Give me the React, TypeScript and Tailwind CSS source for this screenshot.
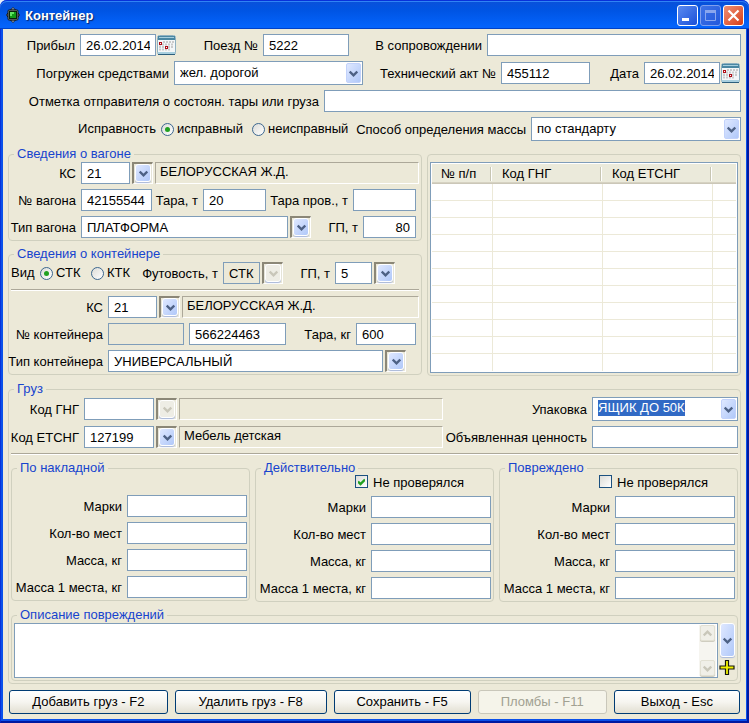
import { useEffect, useRef, type ReactNode } from "react";

function Lbl({ htmlFor, className = "", children }: { htmlFor?: string; className?: string; children: ReactNode }) {
  return (
    <label htmlFor={htmlFor} className={`flex shrink-0 items-center justify-end whitespace-nowrap pt-[2px] pr-[5px] ${className}`}>
      {children}
    </label>
  );
}

function Txt({ id, value = "", className = "", disabled = false, label }: { id?: string; value?: string; className?: string; disabled?: boolean; label?: string }) {
  return (
    <input
      id={id}
      type="text"
      aria-label={label}
      defaultValue={value}
      disabled={disabled}
      className={`h-[22px] min-w-0 border border-[#7f9db9] px-[5px] leading-4 outline-none ${disabled ? "bg-[#ece9d8]" : "bg-white"} ${className}`}
    />
  );
}

function Chevron({ up = false, color = "#4d6185" }: { up?: boolean; color?: string }) {
  return (
    <svg width="9" height="7" viewBox="0 0 9 7" fill="none" aria-hidden="true">
      <path d={up ? "M.7 5.5 4.5 1.700 8.300 5.500" : "M.7 1.500 4.500 5.300 8.300 1.500"} stroke={color} strokeWidth="2.4" />
    </svg>
  );
}

const blueFace = "bg-linear-to-br from-[#dfe8ff] to-[#b0c8f9]";

function DropButton({ label, disabled = false }: { label: string; disabled?: boolean }) {
  return (
    <button
      type="button"
      aria-label={label}
      disabled={disabled}
      className="mx-[2px] flex h-[22px] w-[21px] shrink-0 border-t-2 border-l-2 border-r border-b border-t-[#8b8777] border-l-[#8b8777] border-r-white border-b-white pl-px"
    >
      <span
        className={`flex h-[18px] w-4 items-center justify-center rounded-[3px] border border-white shadow-[0_1px_1px_#a9b8dc] ${
          disabled ? "bg-[#eeede5]" : blueFace
        }`}
      >
        <Chevron color={disabled ? "#c9c7ba" : undefined} />
      </span>
    </button>
  );
}

function ComboArrow({ className }: { className: string }) {
  return (
    <span className={`pointer-events-none absolute flex w-[15px] items-center justify-center rounded-[2px] border border-[#c2d2fb] ${blueFace} ${className}`}>
      <Chevron />
    </span>
  );
}

function Select({ id, value, className = "" }: { id: string; value: string; className?: string }) {
  return (
    <span className={`relative flex h-6 min-w-0 ${className}`}>
      <select id={id} defaultValue={value} className="w-full appearance-none border border-[#7f9db9] bg-white pr-5 pl-[5px] leading-4 outline-none">
        <option>{value}</option>
      </select>
      <ComboArrow className="inset-y-[2px] right-[2px]" />
    </span>
  );
}

function EditableCombo({ id, value, className = "" }: { id: string; value: string; className?: string }) {
  const ref = useRef<HTMLInputElement>(null);
  useEffect(() => {
    ref.current?.focus();
    ref.current?.select();
  }, []);
  return (
    <span className={`relative flex h-6 items-start border border-[#7f9db9] bg-white pt-[2px] pr-5 pl-[5px] ${className}`}>
      <input
        ref={ref}
        id={id}
        role="combobox"
        aria-expanded="false"
        aria-controls={id}
        defaultValue={value}
        className="h-4 w-full min-w-0 leading-4 outline-none selection:bg-[#316ac5] selection:text-white"
      />
      <ComboArrow className="inset-y-px right-px" />
    </span>
  );
}

function Radio({ name, label, checked = false, className = "" }: { name: string; label: string; checked?: boolean; className?: string }) {
  return (
    <label className={`flex shrink-0 items-center gap-[3px] whitespace-nowrap ${className}`}>
      <span className="grid size-[13px] place-items-center">
        <input
          type="radio"
          name={name}
          defaultChecked={checked}
          className="peer size-[13px] appearance-none rounded-full border border-[#3c678f] bg-linear-to-br from-[#dcdcd7] to-white [grid-area:1/1]"
        />
        <span className="pointer-events-none hidden size-[5px] rounded-full bg-[#21a121] [grid-area:1/1] peer-checked:block" />
      </span>
      {label}
    </label>
  );
}

function Check({ label, checked = false }: { label: string; checked?: boolean }) {
  return (
    <label className="ml-[97px] flex h-4 items-start gap-[5px] whitespace-nowrap">
      <span className="grid size-[13px] place-items-center">
        <input
          type="checkbox"
          defaultChecked={checked}
          className="peer size-[13px] appearance-none border border-[#1c5180] bg-linear-to-br from-[#dcdcd7] to-white [grid-area:1/1]"
        />
        <svg width="7" height="8" viewBox="0 0 7 8" className="pointer-events-none hidden [grid-area:1/1] peer-checked:block" fill="none" aria-hidden="true">
          <path d="M0 3.5 2.5 6 7 1.5" stroke="#21a121" strokeWidth="2.4" />
        </svg>
      </span>
      {label}
    </label>
  );
}

function Group({ title, className = "", children }: { title: string; className?: string; children: ReactNode }) {
  return (
    <fieldset className={`min-w-0 rounded-[4px] border border-[#d0d0bf] px-[2px] pb-[2px] ${className}`}>
      <legend className="ml-[3px] px-[3px] leading-[14px] text-[#1744ce]">{title}</legend>
      {children}
    </fieldset>
  );
}

function Panel({ children }: { children?: ReactNode }) {
  return (
    <output className="block h-[22px] min-w-0 flex-1 truncate border border-t-[#aca899] border-r-white border-b-white border-l-[#aca899] px-1 leading-[17px]">
      {children}
    </output>
  );
}

function Divider() {
  return <hr className="h-[2px] border-t border-b border-t-[#aca899] border-b-white" />;
}

function CalendarButton({ label }: { label: string }) {
  return (
    <button type="button" aria-label={label} className="ml-px h-[22px] w-5 shrink-0">
      <svg width="20" height="22" viewBox="0 0 20 22" aria-hidden="true">
        <rect x="0.5" y="1.5" width="18" height="19" rx="2" fill="#f4f7f8" stroke="#8fb0c0" />
        <path d="M1 2h17v4H1z" fill="#4a87a2" />
        <path d="M2 3.500h15" stroke="#a6cede" />
        <path d="M1 18h17v2H1z" fill="#a8cfdf" />
        <path d="M1 20.5h17" stroke="#2c5f7d" />
        <path d="M6 8h11M2 10.500h15M2 13h15M2 15.500h12" stroke="#cbcbcb" strokeWidth="2" strokeDasharray="2 1" />
        <rect x="2.5" y="8.5" width="2" height="2" fill="#fff" stroke="#b00d16" />
        <rect x="8.5" y="12.5" width="2" height="2" fill="#fff" stroke="#b00d16" />
      </svg>
    </button>
  );
}

function CargoFields({ id, title, check, checked }: { id: string; title: string; check?: boolean; checked?: boolean }) {
  return (
    <Group title={title} className="flex-1">
      {check && <Check label="Не проверялся" checked={checked} />}
      <div className={`flex flex-col gap-[5px] ${check ? "pt-[5px]" : "pt-5"}`}>
        {["Марки", "Кол-во мест", "Масса, кг", "Масса 1 места, кг"].map((text, i) => (
          <div key={text} className="flex">
            <Lbl htmlFor={`${id}-${i}`} className="w-[113px]">{text}</Lbl>
            <Txt id={`${id}-${i}`} className="flex-1" />
          </div>
        ))}
      </div>
    </Group>
  );
}

function CommandButton({ className = "", disabled = false, children }: { className?: string; disabled?: boolean; children: ReactNode }) {
  return (
    <button
      type="button"
      disabled={disabled}
      className={`h-6 rounded-[3px] border whitespace-nowrap ${
        disabled
          ? "border-[#c9c7ba] bg-[#f5f4ea] text-[#a1a192]"
          : "border-[#003c74] bg-linear-to-b from-white via-[#f6f5f0] to-[#e2dfd2]"
      } ${className}`}
    >
      {children}
    </button>
  );
}

function TitleBar() {
  const box = "flex size-[21px] items-center justify-center rounded-[3px] border";
  return (
    <header className="flex h-[29px] items-center rounded-t-[7px] bg-linear-to-b from-[#0a50d8] from-0% via-[#0054e3] via-35% to-[#0463fb] to-90% pr-[5px] pl-[6px] shadow-[inset_0_1px_0_#0831d9,inset_0_2px_0_#2f83f5,inset_0_-1px_0_#0042c8]">
      <svg width="14" height="16" viewBox="0 0 14 16" aria-hidden="true">
        <path d="M7 .5 9.500 3h-5zM7 15.500 4.500 13h5zM.5 8 2 6v4zM13.500 8 12 6v4z" fill="#dfe6e6" stroke="#10161c" strokeWidth="1" />
        <rect x="2" y="3" width="10" height="10" rx="1" fill="#8f9c94" stroke="#10161c" />
        <rect x="3.5" y="4.500" width="7" height="7" fill="#129a16" stroke="#06230a" />
        <path d="M4 5h4v2H6v2H4z" fill="#5fe35f" />
      </svg>
      <h1 className="ml-[5px] flex-1 pt-[2px] text-[13px] font-bold text-white [text-shadow:1px_1px_1px_#0a246a]">Контейнер</h1>
      <div className="flex gap-[2px] pt-[2px]">
        <button type="button" aria-label="Свернуть" className={`${box} border-white bg-linear-to-br from-[#5b8af0] to-[#1c4fd8]`}>
          <svg width="13" height="13" viewBox="0 0 13 13" aria-hidden="true"><path d="M1 9h7v3H1z" fill="#fff" /></svg>
        </button>
        <button type="button" aria-label="Развернуть" disabled className={`${box} border-[#7f9fee] bg-linear-to-br from-[#3f72e6] to-[#2258dc]`}>
          <svg width="13" height="13" viewBox="0 0 13 13" fill="none" aria-hidden="true">
            <path d="M1.500 1.500h10v10h-10z" stroke="#8aa6ee" />
            <path d="M1 2.500h11" stroke="#8aa6ee" strokeWidth="3" />
          </svg>
        </button>
        <button type="button" aria-label="Закрыть" className={`${box} border-white bg-linear-to-br from-[#ee8e72] to-[#d63a0d]`}>
          <svg width="13" height="13" viewBox="0 0 13 13" aria-hidden="true"><path d="M1.500 1.500l10 10M11.500 1.500l-10 10" stroke="#fff" strokeWidth="2.200" /></svg>
        </button>
      </div>
    </header>
  );
}

function WagonGroup() {
  return (
    <Group title="Сведения о вагоне">
      <div className="flex flex-col gap-[5px] pt-px">
        <div className="flex">
          <Lbl htmlFor="w-ks" className="w-[70px]">КС</Lbl>
          <Txt id="w-ks" value="21" className="w-[49px]" />
          <DropButton label="Выбрать КС вагона" />
          <Panel>БЕЛОРУССКАЯ Ж.Д.</Panel>
        </div>
        <div className="flex pr-[3px]">
          <Lbl htmlFor="w-no" className="w-[70px]">№ вагона</Lbl>
          <Txt id="w-no" value="42155544" className="w-[71px]" />
          <Lbl htmlFor="w-tara" className="w-[51px]">Тара, т</Lbl>
          <Txt id="w-tara" value="20" className="w-[63px]" />
          <Lbl htmlFor="w-tara2" className="w-[87px]">Тара пров., т</Lbl>
          <Txt id="w-tara2" className="flex-1" />
        </div>
        <div className="flex pr-[3px]">
          <Lbl htmlFor="w-type" className="w-[70px]">Тип вагона</Lbl>
          <Txt id="w-type" value="ПЛАТФОРМА" className="flex-1" />
          <DropButton label="Выбрать тип вагона" />
          <Lbl htmlFor="w-gp" className="w-[50px]">ГП, т</Lbl>
          <Txt id="w-gp" value="80" className="w-[53px] text-right" />
        </div>
      </div>
    </Group>
  );
}

function ContainerGroup() {
  return (
    <Group title="Сведения о контейнере">
      <div className="flex flex-col gap-[5px] pt-px">
        <div className="flex">
          <span className="flex w-[29px] items-center">Вид</span>
          <Radio name="kind" label="СТК" checked className="w-[51px]" />
          <Radio name="kind" label="КТК" className="w-[46px]" />
          <Lbl htmlFor="c-foot" className="w-[86px]">Футовость, т</Lbl>
          <Txt id="c-foot" value="СТК" disabled className="w-[37px]" />
          <DropButton label="Выбрать футовость" disabled />
          <Lbl htmlFor="c-gp" className="w-[50px]">ГП, т</Lbl>
          <Txt id="c-gp" value="5" className="w-[37px]" />
          <DropButton label="Выбрать ГП" />
        </div>
        <Divider />
        <div className="flex">
          <Lbl htmlFor="c-ks" className="w-[97px]">КС</Lbl>
          <Txt id="c-ks" value="21" className="w-[49px]" />
          <DropButton label="Выбрать КС контейнера" />
          <Panel>БЕЛОРУССКАЯ Ж.Д.</Panel>
        </div>
        <div className="flex pr-[3px]">
          <Lbl htmlFor="c-no" className="w-[97px]">№ контейнера</Lbl>
          <Txt label="Префикс контейнера" disabled className="mr-[5px] w-[76px]" />
          <Txt id="c-no" value="566224463" className="w-[97px]" />
          <Lbl htmlFor="c-tara" className="w-[70px]">Тара, кг</Lbl>
          <Txt id="c-tara" value="600" className="flex-1" />
        </div>
        <div className="flex pr-[11px]">
          <Lbl htmlFor="c-type" className="w-[97px]">Тип контейнера</Lbl>
          <Txt id="c-type" value="УНИВЕРСАЛЬНЫЙ" className="flex-1" />
          <DropButton label="Выбрать тип контейнера" />
        </div>
      </div>
    </Group>
  );
}

const columns = ["№ п/п", "Код ГНГ", "Код ЕТСНГ", ""];

function CargoTable() {
  return (
    <div className="flex min-w-0 flex-[314] pt-[7px]">
      <div className="flex min-w-0 flex-1 rounded-[4px] border border-[#d0d0bf] px-[2px] pt-[7px] pb-[2px]">
        <div className="min-w-0 flex-1 border border-[#7f9db9] bg-white p-px">
          <table className="w-full table-fixed border-separate border-spacing-0">
            <colgroup>
              <col className="w-[61px]" />
              <col className="w-[110px]" />
              <col className="w-[110px]" />
              <col />
            </colgroup>
            <thead>
              <tr className="h-5 bg-[#ebeadb] shadow-[inset_0_-1px_0_#cbc7b8,inset_0_-2px_0_#d6d2c2]">
                {columns.map((c, i) => (
                  <th key={i} className="p-0 text-left font-normal">
                    <span className={`mr-px flex h-[14px] items-center whitespace-nowrap pl-[9px] leading-[14px] ${i < 3 ? "border-r border-white shadow-[inset_-1px_0_0_#c7c5b2]" : ""}`}>{c}</span>
                  </th>
                ))}
              </tr>
            </thead>
            <tbody>
              {Array.from({ length: 11 }, (_, r) => (
                <tr key={r} className="h-[17px]">
                  {columns.map((_, i) => (
                    <td key={i} className={`border-[#ece9d8] p-0 ${r < 10 ? "border-b" : ""} ${i < 3 ? "border-r" : ""}`} />
                  ))}
                </tr>
              ))}
            </tbody>
          </table>
        </div>
      </div>
    </div>
  );
}

function ScrollArrow({ up = false }: { up?: boolean }) {
  return (
    <span className="flex h-4 w-[15px] items-center justify-center rounded-[2px] border border-[#e2e0d3] bg-[#f0efe8] shadow-[0_1px_0_#cfcdc0]">
      <Chevron up={up} color="#c9c7ba" />
    </span>
  );
}

export default function App() {
  return (
    <div className="bg-[#e8eef8] font-['Liberation_Sans',Arial,sans-serif] text-[13px] leading-4 text-black">
      <TitleBar />
      <div className="border-r-2 border-b-2 border-l border-r-[#0019a0] border-b-[#0019a0] border-l-[#0831d9]">
        <main className="border-r border-b-2 border-l-2 border-[#0a50ea] bg-[#ece9d8] px-[5px] pt-[5px] pb-[5px]">
          <div className="flex">
            <Lbl htmlFor="arrived" className="w-[72px]">Прибыл</Lbl>
            <Txt id="arrived" value="26.02.2014" className="w-[76px]" />
            <CalendarButton label="Выбрать дату прибытия" />
            <Lbl htmlFor="train" className="w-[86px]">Поезд №</Lbl>
            <Txt id="train" value="5222" className="w-[86px]" />
            <Lbl htmlFor="escort" className="w-[138px]">В сопровождении</Lbl>
            <Txt id="escort" className="flex-1" />
          </div>
          <div className="mt-[5px] flex items-center">
            <Lbl htmlFor="loaded" className="w-[166px]">Погружен средствами</Lbl>
            <Select id="loaded" value="жел. дорогой" className="flex-1" />
            <Lbl htmlFor="act" className="w-[138px]">Технический акт №</Lbl>
            <Txt id="act" value="455112" className="w-[89px]" />
            <Lbl htmlFor="date" className="w-[54px]">Дата</Lbl>
            <Txt id="date" value="26.02.2014" className="w-[76px]" />
            <CalendarButton label="Выбрать дату акта" />
          </div>
          <div className="mt-[5px] flex">
            <Lbl htmlFor="note" className="w-[316px]">Отметка отправителя о состоян. тары или груза</Lbl>
            <Txt id="note" className="flex-1" />
          </div>
          <div className="mt-[5px] flex items-center">
            <span className="flex w-[153px] shrink-0 justify-end pr-[5px]">Исправность</span>
            <Radio name="state" label="исправный" checked className="w-[91px]" />
            <Radio name="state" label="неисправный" className="w-[97px]" />
            <Lbl htmlFor="method" className="w-[182px]">Способ определения массы</Lbl>
            <Select id="method" value="по стандарту" className="flex-1" />
          </div>

          <div className="mt-[6px] flex gap-[5px]">
            <div className="flex min-w-0 flex-[414] flex-col gap-[6px]">
              <WagonGroup />
              <ContainerGroup />
            </div>
            <CargoTable />
          </div>

          <Group title="Груз" className="mt-[6px]">
            <div className="flex items-center pt-px">
              <Lbl htmlFor="gng" className="w-[73px]">Код ГНГ</Lbl>
              <Txt id="gng" className="w-[70px]" />
              <DropButton label="Выбрать код ГНГ" disabled />
              <Panel />
              <Lbl htmlFor="pack" className="w-[149px]">Упаковка</Lbl>
              <EditableCombo id="pack" value="ЯЩИК ДО 50К" className="w-[146px]" />
            </div>
            <div className="mt-[5px] mb-[5px] flex">
              <Lbl htmlFor="etsng" className="w-[73px]">Код ЕТСНГ</Lbl>
              <Txt id="etsng" value="127199" className="w-[70px]" />
              <DropButton label="Выбрать код ЕТСНГ" />
              <Panel>Мебель детская</Panel>
              <Lbl htmlFor="price" className="w-[149px]">Объявленная ценность</Lbl>
              <Txt id="price" className="w-[146px]" />
            </div>
            <Divider />
            <div className="mt-[6px] flex items-start gap-[5px]">
              <CargoFields id="inv" title="По накладной" />
              <CargoFields id="fact" title="Действительно" check checked />
              <CargoFields id="dmg" title="Повреждено" check />
            </div>
            <Group title="Описание повреждений" className="mt-[6px]">
              <div className="flex gap-px pt-px">
                <div className="flex h-[55px] min-w-0 flex-1 border border-[#7f9db9] bg-white">
                  <textarea aria-label="Описание повреждений" className="min-w-0 flex-1 resize-none overflow-hidden p-1 outline-none" />
                  <div className="my-px mr-px flex w-[17px] flex-col items-center justify-between bg-[#f6f5f0]">
                    <ScrollArrow up />
                    <ScrollArrow />
                  </div>
                </div>
                <div className="flex w-4 flex-col items-center gap-[3px]">
                  <button type="button" aria-label="Выбрать описание" className={`flex h-[34px] w-[15px] items-center justify-center rounded-[3px] border border-white shadow-[0_1px_1px_#a9b8dc] ${blueFace}`}>
                    <Chevron />
                  </button>
                  <button type="button" aria-label="Добавить описание">
                    <svg width="16" height="15" viewBox="0 0 16 15" className="block" aria-hidden="true">
                      <path d="M6.500 .5h3v5.500h5.500v3h-5.500v5.500h-3v-5.500h-5.500v-3h5.500z" fill="#f2f200" stroke="#16160a" strokeWidth="1.200" />
                    </svg>
                  </button>
                </div>
              </div>
            </Group>
          </Group>

          <div className="mt-[6px] flex gap-[7px] px-px">
            <CommandButton className="flex-[159]">Добавить груз - F2</CommandButton>
            <CommandButton className="flex-[152]">Удалить груз - F8</CommandButton>
            <CommandButton className="flex-[137]">Сохранить - F5</CommandButton>
            <CommandButton className="flex-[129]" disabled>Пломбы - F11</CommandButton>
            <CommandButton className="flex-[126]">Выход - Esc</CommandButton>
          </div>
        </main>
      </div>
    </div>
  );
}
